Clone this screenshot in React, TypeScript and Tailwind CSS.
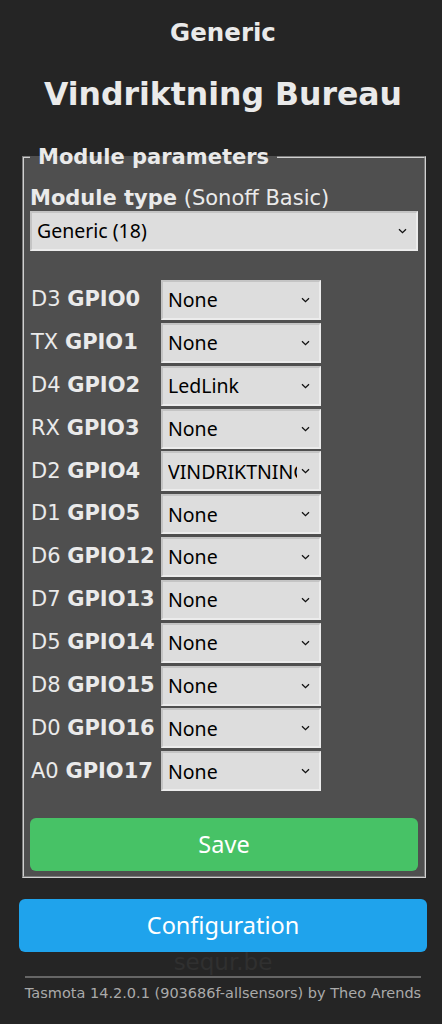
import React from "react";

const rows: [string, string, string][] = [
  ["D3", "GPIO0", "None"],
  ["TX", "GPIO1", "None"],
  ["D4", "GPIO2", "LedLink"],
  ["RX", "GPIO3", "None"],
  ["D2", "GPIO4", "VINDRIKTNING"],
  ["D1", "GPIO5", "None"],
  ["D6", "GPIO12", "None"],
  ["D7", "GPIO13", "None"],
  ["D5", "GPIO14", "None"],
  ["D8", "GPIO15", "None"],
  ["D0", "GPIO16", "None"],
  ["A0", "GPIO17", "None"],
];

function Chevron() {
  return (
    <svg
      width="9"
      height="6"
      viewBox="0 0 9 6"
      className="pointer-events-none absolute right-[9px] top-1/2 -translate-y-1/2"
    >
      <path d="M1 1.2 L4.5 4.6 L8 1.2" fill="none" stroke="#111" strokeWidth="1.3" />
    </svg>
  );
}

function FakeSelect({ value, className }: { value: string; className: string }) {
  return (
    <div
      className={
        "relative h-[40px] bg-[#dddddd] border-2 border-t-[#c4c4c4] border-l-[#c4c4c4] border-b-[#ececec] border-r-[#ececec] text-black text-[19.5px] font-['Noto_Sans',sans-serif] flex items-center pl-[5px] pr-[22px] overflow-hidden whitespace-nowrap " +
        className
      }
    >
      <span className="overflow-hidden">{value}</span>
      <Chevron />
    </div>
  );
}

export default function App() {
  return (
    <div className="min-h-screen bg-[#252525] text-[#eaeaea] font-['DejaVu_Sans',sans-serif]">
      <div className="ml-[19px] w-[408px] pt-[18px]">
        <div className="text-center">
          <h3 className="text-[24.5px] font-bold leading-[30px]">Generic</h3>
          <h2 className="text-[31.5px] font-bold leading-[38px] mt-[27px]">Vindriktning Bureau</h2>
        </div>

        <fieldset className="mx-[3px] mt-[31px] bg-[#4f4f4f] border-2 [border-style:groove] border-[#d0d0d0] px-[6px] pb-[5px] pt-0">
          <legend className="ml-0 px-[8px] text-[21px] font-bold leading-[26px]">Module parameters</legend>
          <div className="text-[21px] leading-[26px] mt-[15px] whitespace-nowrap">
            <b>Module type</b> (Sonoff Basic)
          </div>
          <FakeSelect value="Generic (18)" className="w-[388px]" />

          <div className="mt-[29px] flex flex-col gap-[2.85px]">
            {rows.map(([pin, gpio, val]) => (
              <div key={gpio} className="flex items-center">
                <div className="w-[131px] pl-[1px] text-[21px] whitespace-nowrap">
                  {pin} <b>{gpio}</b>
                </div>
                <FakeSelect value={val} className="w-[160px]" />
              </div>
            ))}
          </div>

          <button className="mt-[27px] w-[388px] h-[53px] rounded-[6px] bg-[#47c266] text-white text-[23.5px] font-['Noto_Sans',sans-serif] leading-none">
            Save
          </button>
        </fieldset>

        <button className="mt-[21px] w-[408px] h-[53px] rounded-[6px] bg-[#1fa3ec] text-white text-[23.5px] font-['Noto_Sans',sans-serif] leading-none">
          Configuration
        </button>

        <div className="text-center text-[23px] leading-[22px] text-[#303030] mt-[-1px]">sequr.be</div>
        <hr className="mx-[6px] mt-[3px] border-0 border-t-2 border-[#666666]" />
        <div className="text-center text-[14.5px] leading-[20px] text-[#aaaaaa] mt-[5px] whitespace-nowrap">
          Tasmota 14.2.0.1 (903686f-allsensors) by Theo Arends
        </div>
      </div>
    </div>
  );
}
